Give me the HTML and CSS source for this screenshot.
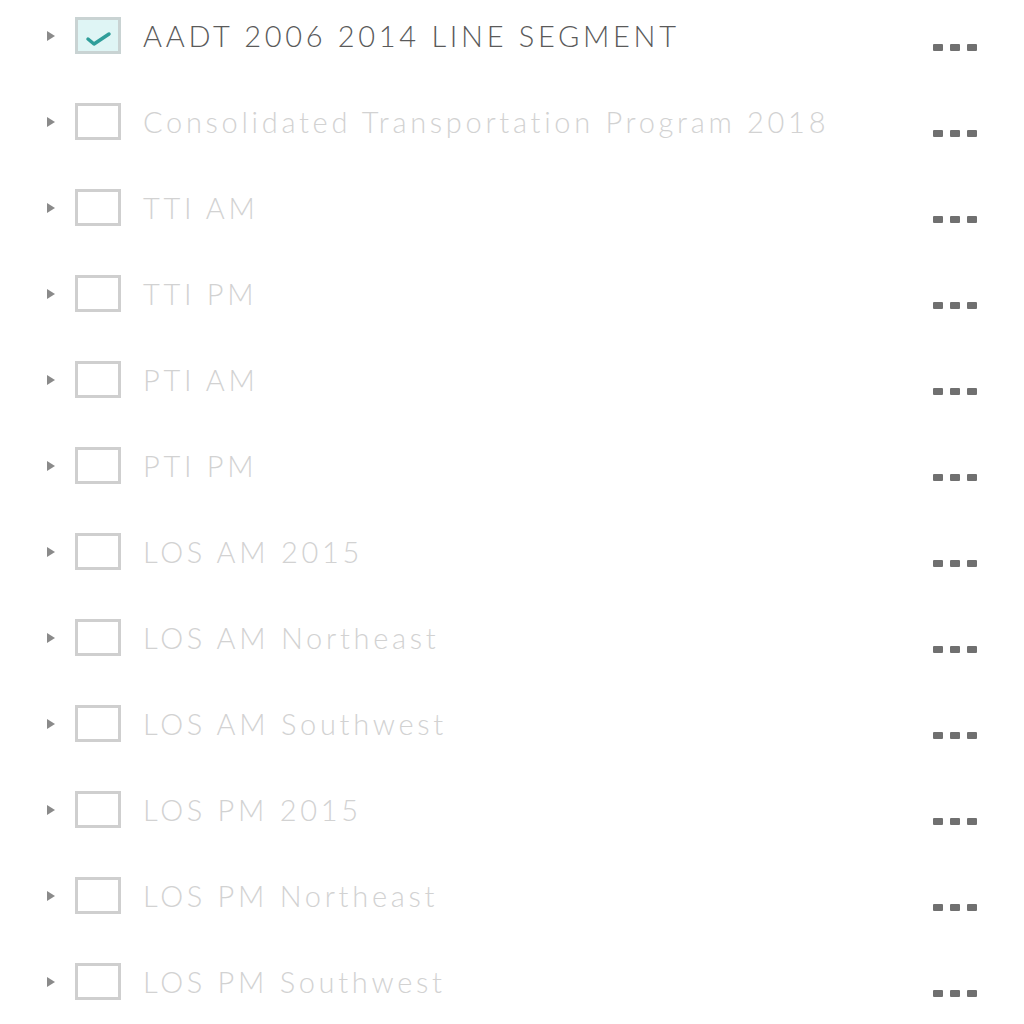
FILE: index.html
```html
<!DOCTYPE html>
<html>
<head>
<meta charset="utf-8">
<link rel="stylesheet" href="styles.css">
</head>
<body>
<ul class="layers">
  <li class="row active">
    <span class="caret"></span>
    <span class="box checked"><svg viewBox="0 0 46 37" width="46" height="37"><path d="M13 22 L19 27 L34 17" fill="none" stroke="#2f9e9a" stroke-width="3.5" stroke-linecap="round" stroke-linejoin="round"/></svg></span>
    <span class="label">AADT 2006 2014 LINE SEGMENT</span>
    <span class="more"><i></i><i></i><i></i></span>
  </li>
  <li class="row"><span class="caret"></span><span class="box"></span><span class="label">Consolidated Transportation Program 2018</span><span class="more"><i></i><i></i><i></i></span></li>
  <li class="row"><span class="caret"></span><span class="box"></span><span class="label">TTI AM</span><span class="more"><i></i><i></i><i></i></span></li>
  <li class="row"><span class="caret"></span><span class="box"></span><span class="label">TTI PM</span><span class="more"><i></i><i></i><i></i></span></li>
  <li class="row"><span class="caret"></span><span class="box"></span><span class="label">PTI AM</span><span class="more"><i></i><i></i><i></i></span></li>
  <li class="row"><span class="caret"></span><span class="box"></span><span class="label">PTI PM</span><span class="more"><i></i><i></i><i></i></span></li>
  <li class="row"><span class="caret"></span><span class="box"></span><span class="label">LOS AM 2015</span><span class="more"><i></i><i></i><i></i></span></li>
  <li class="row"><span class="caret"></span><span class="box"></span><span class="label">LOS AM Northeast</span><span class="more"><i></i><i></i><i></i></span></li>
  <li class="row"><span class="caret"></span><span class="box"></span><span class="label">LOS AM Southwest</span><span class="more"><i></i><i></i><i></i></span></li>
  <li class="row"><span class="caret"></span><span class="box"></span><span class="label">LOS PM 2015</span><span class="more"><i></i><i></i><i></i></span></li>
  <li class="row"><span class="caret"></span><span class="box"></span><span class="label">LOS PM Northeast</span><span class="more"><i></i><i></i><i></i></span></li>
  <li class="row"><span class="caret"></span><span class="box"></span><span class="label">LOS PM Southwest</span><span class="more"><i></i><i></i><i></i></span></li>
</ul>
</body>
</html>
```
FILE: styles.css
```css
html, body {
  margin: 0;
  padding: 0;
  background: #ffffff;
  font-family: Lato, "Open Sans", sans-serif;
}
.layers {
  list-style: none;
  margin: 0;
  padding: 0;
}
.row {
  height: 86px;
  box-sizing: border-box;
  padding: 17px 0 0 47px;
  display: flex;
  align-items: flex-start;
}
.caret {
  width: 0;
  height: 0;
  margin-top: 14px;
  border-top: 5px solid transparent;
  border-bottom: 5px solid transparent;
  border-left: 8px solid #8a8a8a;
}
.box {
  margin-left: 20px;
  width: 46px;
  height: 37px;
  box-sizing: border-box;
  border: 3px solid #cfcfcf;
  position: relative;
  flex: none;
}
.box.checked {
  background: #dff5f5;
  border-color: #c9d3d3;
}
.box svg {
  position: absolute;
  left: -3px;
  top: -3px;
}
.label {
  margin-left: 22px;
  font-size: 29px;
  font-weight: 300;
  line-height: 37px;
  color: #d2d2d2;
  letter-spacing: 3.7px;
  white-space: nowrap;
}
.active .label {
  color: #5a5a5a;
}
.more {
  margin-left: auto;
  margin-right: 47px;
  margin-top: 27px;
  display: flex;
  gap: 7px;
}
.more i {
  width: 10px;
  height: 7px;
  background: #707070;
  border-radius: 1px;
}
```
